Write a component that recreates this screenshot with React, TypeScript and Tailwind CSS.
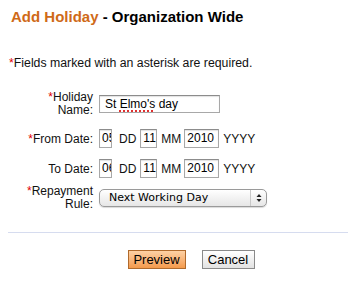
import React from 'react';

const Req = () => <span className="text-[#e00000]">*</span>;

const Box: React.FC<{ w: string; children: React.ReactNode }> = ({ w, children }) => (
  <div
    className={`${w} h-[19px] overflow-hidden whitespace-nowrap border border-[#a8a8a8] border-t-[#8c8c8c] bg-white pl-[2px] text-[12px] leading-[17px] text-black shadow-[inset_0_1px_1px_rgba(0,0,0,0.12)]`}
  >
    {children}
  </div>
);

const DateRow: React.FC<{ day: string }> = ({ day }) => (
  <div className="flex items-center">
    <Box w="w-[13px]">{day}</Box>
    <span className="ml-[7px]">DD</span>
    <div className="ml-[4px]">
      <Box w="w-[17px]">11</Box>
    </div>
    <span className="ml-[4px]">MM</span>
    <div className="ml-[3px]">
      <Box w="w-[35px]">2010</Box>
    </div>
    <span className="ml-[4px]">YYYY</span>
  </div>
);

export default function App() {
  return (
    <div className="h-[281px] w-[348px] bg-white text-[12px] text-[#111] [font-family:'Liberation_Sans',Arial,sans-serif]">
      <h1 className="pl-[11px] pt-[8px] text-[15px] font-bold leading-[18px] text-black">
        <span className="text-[#cf6a18]">Add Holiday</span> - Organization Wide
      </h1>

      <p className="mt-[30px] pl-[9px] text-[12.3px] leading-[14px]">
        <Req />Fields marked with an asterisk are required.
      </p>

      <div className="mt-[21px] grid grid-cols-[93px_1fr] items-center gap-x-[6px]">
        <div className="text-right leading-[13px]">
          <Req />Holiday
          <br />
          Name:
        </div>
        <div className="h-[18px] w-[121px] whitespace-nowrap border border-[#a8a8a8] border-t-[#8c8c8c] bg-white pl-[5px] text-[12px] leading-[16px] text-black shadow-[inset_0_1px_1px_rgba(0,0,0,0.12)]">
          St <span className="underline decoration-[#e03030] decoration-dotted decoration-[1.5px] underline-offset-[2px]">Elmo's</span> day
        </div>

        <div className="mt-[12px] text-right">
          <Req />From Date:
        </div>
        <div className="mt-[12px]">
          <DateRow day="05" />
        </div>

        <div className="mt-[11px] text-right">To Date:</div>
        <div className="mt-[11px]">
          <DateRow day="06" />
        </div>

        <div className="mt-[7px] text-right leading-[13px]">
          <Req />Repayment
          <br />
          Rule:
        </div>
        <div className="mt-[7px] flex h-[18px] w-[168px] items-center rounded-[5px] border border-[#9a9a9a] bg-gradient-to-b from-white to-[#e6e6e6] shadow-[0_1px_1px_rgba(0,0,0,0.15)]">
          <span className="flex-1 pl-[9px] text-[11px] text-black [font-family:'DejaVu_Sans',sans-serif]">
            Next Working Day
          </span>
          <div className="flex h-full w-[16px] flex-col items-center justify-center border-l border-[#c8c8c8]">
            <svg width="6" height="10" viewBox="0 0 6 10">
              <path d="M3 1 L5.5 4 L0.5 4 Z" fill="#222" />
              <path d="M3 9 L5.5 6 L0.5 6 Z" fill="#222" />
            </svg>
          </div>
        </div>
      </div>

      <div className="ml-[8px] mt-[21px] h-[1px] bg-[#d6dcef]" />

      <div className="mt-[17px] flex justify-center gap-[16px] pl-[34px]">
        <button className="h-[19px] w-[58px] border border-[#b06a2c] bg-gradient-to-b from-[#fdd1a4] to-[#f49a4b] text-[13px] leading-[17px] text-black">
          Preview
        </button>
        <button className="h-[19px] w-[53px] border border-[#8a8a8a] bg-gradient-to-b from-white to-[#e2e2e2] text-[13px] leading-[17px] text-black">
          Cancel
        </button>
      </div>
    </div>
  );
}
